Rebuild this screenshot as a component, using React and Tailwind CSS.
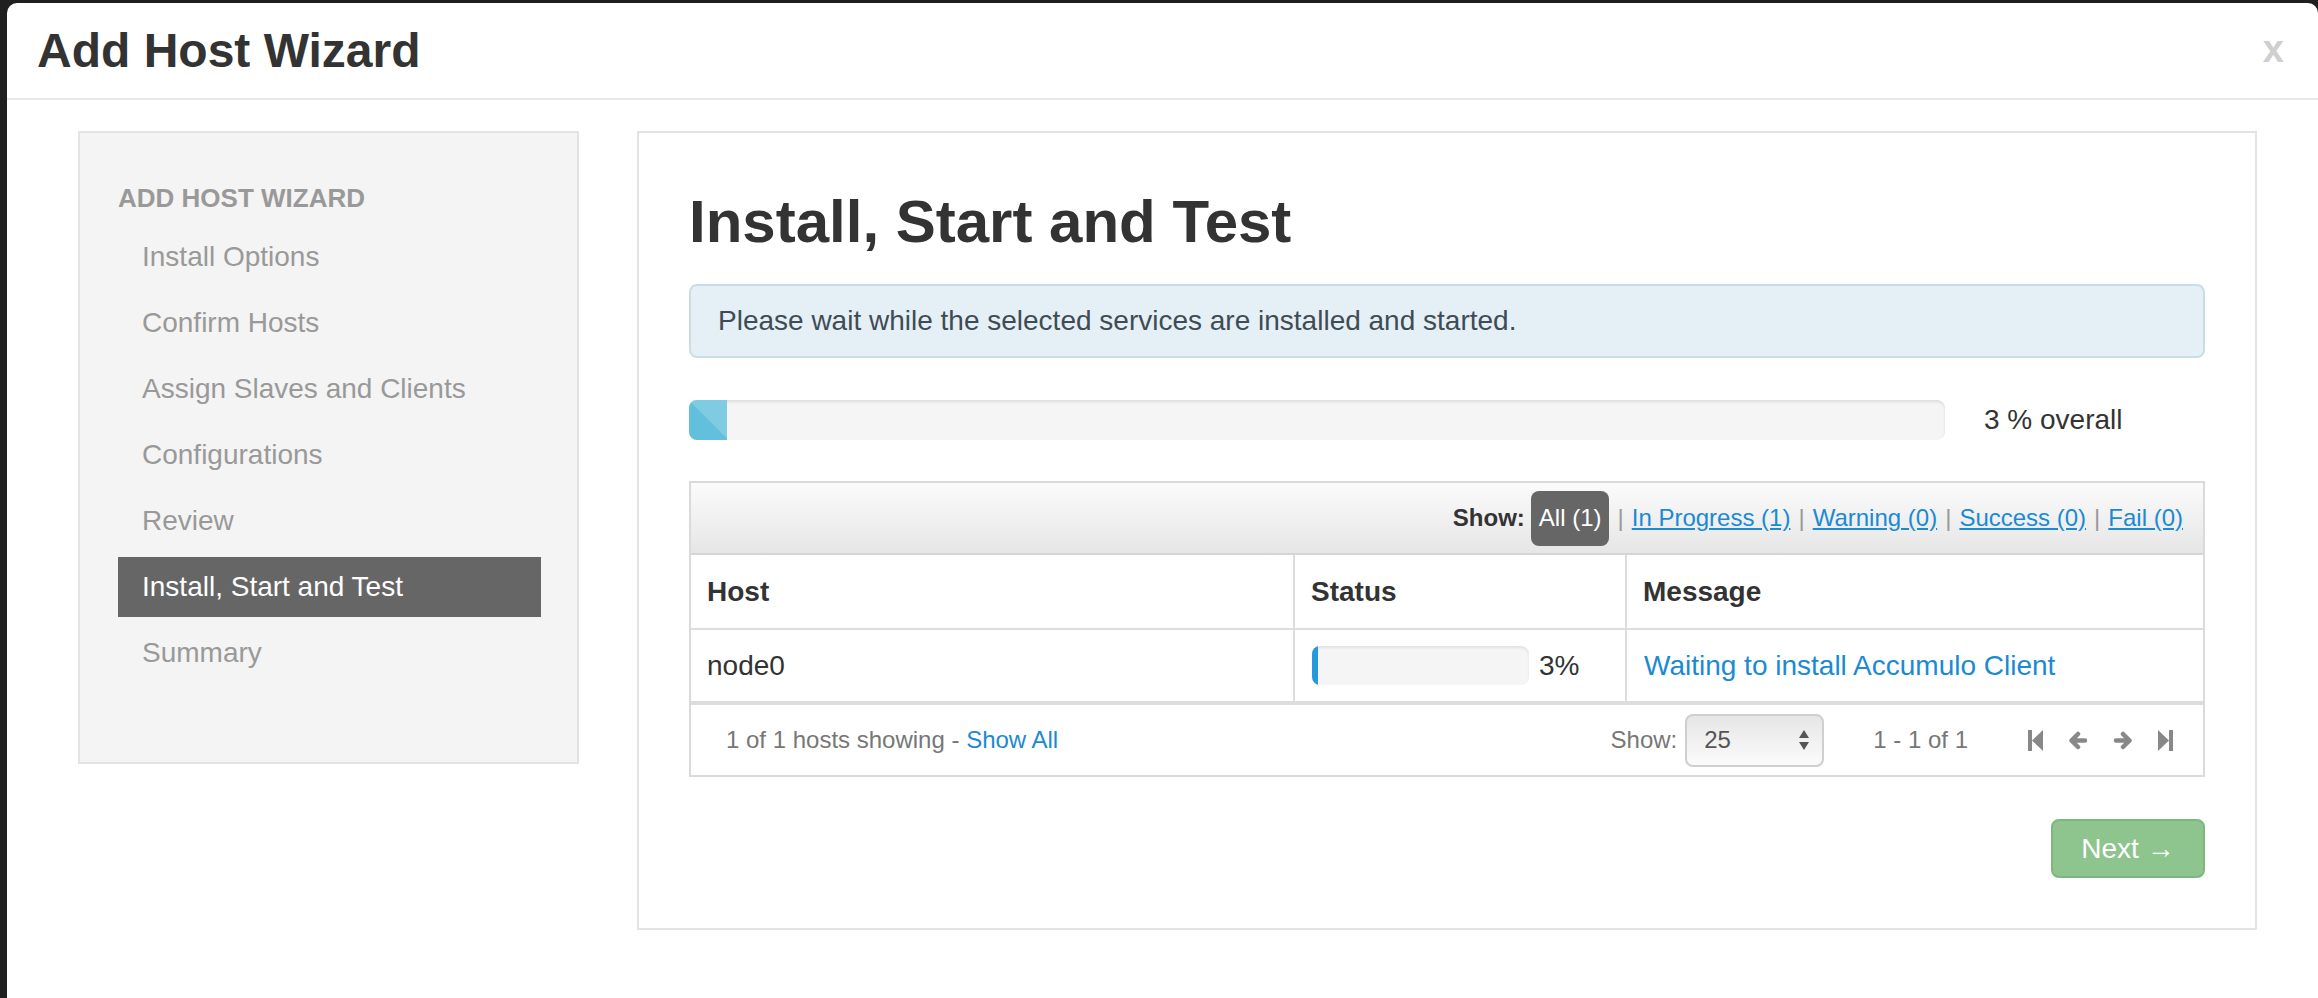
import React from 'react'

const steps = [
  'Install Options',
  'Confirm Hosts',
  'Assign Slaves and Clients',
  'Configurations',
  'Review',
  'Install, Start and Test',
  'Summary'
]

const filters = ['In Progress (1)', 'Warning (0)', 'Success (0)', 'Fail (0)']

function StepBackward() {
  return (
    <svg width="15" height="21" viewBox="0 0 15 21" fill="#888">
      <rect x="0" y="0" width="4" height="21" />
      <polygon points="15,0 4,10.5 15,21" />
    </svg>
  )
}

function StepForward() {
  return (
    <svg width="15" height="21" viewBox="0 0 15 21" fill="#888">
      <polygon points="0,0 11,10.5 0,21" />
      <rect x="11" y="0" width="4" height="21" />
    </svg>
  )
}

function ArrowLeft() {
  return (
    <svg width="20" height="19" viewBox="0 0 20 19" fill="none" stroke="#888" strokeWidth="4.5" strokeLinecap="round" strokeLinejoin="round">
      <path d="M10 3 L3.5 9.5 L10 16 M3.5 9.5 H17" />
    </svg>
  )
}

function ArrowRight() {
  return (
    <svg width="20" height="19" viewBox="0 0 20 19" fill="none" stroke="#888" strokeWidth="4.5" strokeLinecap="round" strokeLinejoin="round">
      <path d="M10 3 L16.5 9.5 L10 16 M16.5 9.5 H3" />
    </svg>
  )
}

export default function App() {
  return (
    <div className="h-[998px] w-full overflow-hidden bg-[#1f1f1f] pl-[7px] pt-[3px] font-['Liberation_Sans',Arial,sans-serif]">
      <div className="h-[1010px] rounded-[10px] bg-white">
        {/* modal header */}
        <div className="flex h-[97px] items-center justify-between border-b-2 border-[#e8e8e8] pl-[30px] pr-[34px]">
          <h3 className="text-[48px] font-bold leading-none text-[#333]">Add Host Wizard</h3>
          <span className="-mt-[4px] text-[38px] font-bold leading-none text-[#cfcfcf]">x</span>
        </div>

        <div className="flex gap-[58px] pl-[71px] pt-[31px]">
          {/* wizard nav */}
          <div className="h-[633px] w-[501px] shrink-0 border-2 border-[#e3e3e3] bg-[#f4f4f4] pl-[38px] pt-[48px]">
            <div className="mb-[12px] text-[26px] font-bold leading-[34px] text-[#999]">ADD HOST WIZARD</div>
            <ul className="flex w-[423px] flex-col gap-[6px]">
              {steps.map((s) => (
                <li
                  key={s}
                  className={
                    s === 'Install, Start and Test'
                      ? 'h-[60px] bg-[#666] pl-[24px] text-[28px] leading-[60px] text-white'
                      : 'h-[60px] pl-[24px] text-[28px] leading-[60px] text-[#999]'
                  }
                >
                  {s}
                </li>
              ))}
            </ul>
          </div>

          {/* content */}
          <div className="h-[799px] w-[1620px] shrink-0 border-2 border-[#e3e3e3] px-[50px] pt-[53px]">
            <h2 className="text-[60px] font-bold leading-[72px] text-[#333]">Install, Start and Test</h2>

            <div className="mt-[26px] flex h-[74px] items-center rounded-[8px] border-2 border-[#c9dde8] bg-[#e5f0f6] pl-[27px] text-[28px] text-[#3f4c55]">
              Please wait while the selected services are installed and started.
            </div>

            <div className="mt-[41px] flex items-center gap-[39px]">
              <div className="h-[40px] w-[1256px] overflow-hidden rounded-[8px] bg-[#f5f5f5] shadow-[inset_0_2px_3px_rgba(0,0,0,0.1)]">
                <div className="h-full w-[38px] bg-[#62c0dc] bg-[linear-gradient(45deg,rgba(255,255,255,0.18)_25%,transparent_25%,transparent_50%,rgba(255,255,255,0.18)_50%,rgba(255,255,255,0.18)_75%,transparent_75%,transparent)] bg-[length:80px_80px]" />
              </div>
              <span className="text-[28px] text-[#333]">3 % overall</span>
            </div>

            {/* hosts table */}
            <div className="mt-[40px] w-[1516px] border-2 border-[#dadada]">
              <div className="flex h-[72px] items-center justify-end border-b-2 border-[#d5d5d5] bg-[linear-gradient(#fbfbfb,#e6e6e6)] pr-[20px] text-[24px]">
                <span className="mr-[6px] font-bold text-[#333]">Show:</span>
                <span className="flex h-[55px] items-center rounded-[8px] bg-[#666] px-[8px] text-white">All (1)</span>
                {filters.map((f) => (
                  <React.Fragment key={f}>
                    <span className="mx-[8px] text-[#999]">|</span>
                    <span className="text-[#1b8ad3] underline">{f}</span>
                  </React.Fragment>
                ))}
              </div>

              <table className="w-full table-fixed border-collapse text-[28px] text-[#333]">
                <colgroup>
                  <col className="w-[603px]" />
                  <col className="w-[332px]" />
                  <col />
                </colgroup>
                <thead>
                  <tr className="h-[74px]">
                    <th className="border-r-2 border-b-2 border-[#ddd] pl-[16px] text-left font-bold">Host</th>
                    <th className="border-r-2 border-b-2 border-[#ddd] pl-[16px] text-left font-bold">Status</th>
                    <th className="border-b-2 border-[#ddd] pl-[16px] text-left font-bold">Message</th>
                  </tr>
                </thead>
                <tbody>
                  <tr className="h-[74px]">
                    <td className="border-r-2 border-b-4 border-[#ddd] pl-[16px]">node0</td>
                    <td className="border-r-2 border-b-4 border-[#ddd] pl-[17px]">
                      <div className="flex items-center gap-[10px]">
                        <div className="h-[39px] w-[217px] overflow-hidden rounded-[8px] bg-[#f5f5f5] shadow-[inset_0_2px_3px_rgba(0,0,0,0.08)]">
                          <div className="h-full w-[6px] bg-[#2699dd]" />
                        </div>
                        <span>3%</span>
                      </div>
                    </td>
                    <td className="border-b-4 border-[#ddd] pl-[17px] text-[#1b8ad3]">Waiting to install Accumulo Client</td>
                  </tr>
                </tbody>
              </table>

              <div className="flex h-[70px] items-center pl-[35px] pr-[30px] text-[24px] text-[#777]">
                <span>
                  1 of 1 hosts showing - <span className="text-[#1b8ad3]">Show All</span>
                </span>
                <div className="ml-auto flex items-center">
                  <span>Show:</span>
                  <div className="ml-[8px] flex h-[53px] w-[139px] items-center justify-between rounded-[8px] border-2 border-[#cfcfcf] bg-[linear-gradient(#e6e6e6,#fbfbfb)] pl-[17px] pr-[12px] text-[#555]">
                    <span>25</span>
                    <svg width="12" height="22" viewBox="0 0 12 22" fill="#555">
                      <polygon points="6,1 11,9 1,9" />
                      <polygon points="1,13 11,13 6,21" />
                    </svg>
                  </div>
                  <span className="ml-[49px]">1 - 1 of 1</span>
                  <div className="ml-[60px] flex items-center gap-[25px]">
                    <StepBackward />
                    <ArrowLeft />
                    <ArrowRight />
                    <StepForward />
                  </div>
                </div>
              </div>
            </div>

            <div className="mt-[42px] flex w-[1516px] justify-end">
              <button className="h-[59px] w-[154px] rounded-[8px] border-2 border-[#7fb67f] bg-[#8ec48e] text-[28px] text-white">
                Next →
              </button>
            </div>
          </div>
        </div>
      </div>
    </div>
  )
}
